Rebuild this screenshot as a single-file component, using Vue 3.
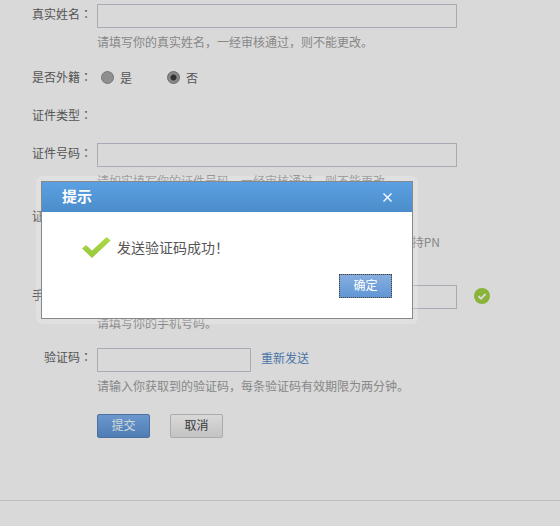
<script setup>
import { ref } from "vue";

const foreign = ref("no");
const showDialog = ref(true);
</script>

<template>
  <div class="page">
    <form class="form" @submit.prevent>
      <div class="row">
        <label class="label">真实姓名<span class="colon">：</span></label>
        <input class="input" type="text" />
      </div>
      <p class="hint">请填写你的真实姓名，一经审核通过，则不能更改。</p>

      <div class="row row-radio">
        <label class="label plain">是否外籍<span class="colon">：</span></label>
        <span class="radio-item" @click="foreign = 'yes'">
          <i class="radio" :class="{ on: foreign === 'yes' }"></i>是
        </span>
        <span class="radio-item" @click="foreign = 'no'">
          <i class="radio" :class="{ on: foreign === 'no' }"></i>否
        </span>
      </div>

      <div class="row row-type">
        <label class="label plain">证件类型<span class="colon">：</span></label>
      </div>

      <div class="row row-number">
        <label class="label">证件号码<span class="colon">：</span></label>
        <input class="input" type="text" />
      </div>
      <p class="hint">请如实填写你的证件号码，一经审核通过，则不能更改。</p>

      <div class="row row-photo">
        <label class="label plain">证件照片<span class="colon">：</span></label>
      </div>
      <p class="hint nowrap">请上传证件照片，文件大小不能超过两兆字节，图片格式 支持PN</p>

      <div class="row row-phone">
        <label class="label">手机号码<span class="colon">：</span></label>
        <input class="input" type="text" />
        <svg class="ok" width="16" height="16" viewBox="0 0 16 16">
          <circle cx="8" cy="8" r="8" fill="#a2d444" />
          <path d="M4.4 8.2l2.6 2.5 4.6-4.8" fill="none" stroke="#fff" stroke-width="2" />
        </svg>
      </div>
      <p class="hint">请填写你的手机号码。</p>

      <div class="row row-code">
        <label class="label high">验证码<span class="colon">：</span></label>
        <input class="input short" type="text" />
        <a class="resend" href="#" @click.prevent>重新发送</a>
      </div>
      <p class="hint">请输入你获取到的验证码，每条验证码有效期限为两分钟。</p>

      <div class="actions">
        <button class="btn primary" type="submit">提交</button>
        <button class="btn" type="button">取消</button>
      </div>
    </form>
    <div class="rule"></div>

    <div v-if="showDialog" class="mask"></div>
    <div v-if="showDialog" class="dialog-wrap">
      <div class="dialog">
        <div class="dialog-head">
          <span class="dialog-title">提示</span>
          <svg class="close" width="9" height="9" viewBox="0 0 9 9" @click="showDialog = false">
            <path d="M.5.5l8 8M8.5.5l-8 8" stroke="#fff" stroke-width="1.3" fill="none" />
          </svg>
        </div>
        <div class="dialog-body">
          <svg class="tick" width="30" height="24" viewBox="0 0 30 24">
            <defs>
              <linearGradient id="tickFill" x1="0" y1="0" x2="0" y2="1">
                <stop offset="0" stop-color="#aadb48" />
                <stop offset="1" stop-color="#98c83c" />
              </linearGradient>
            </defs>
            <path d="M0 12.6L4 9l6 5.4L24.6 1 28.6 4.6 10 22z" fill="url(#tickFill)" />
          </svg>
          <span class="dialog-msg">发送验证码成功！</span>
        </div>
        <div class="dialog-foot">
          <button class="btn-ok" type="button" @click="showDialog = false">确定</button>
        </div>
      </div>
    </div>
  </div>
</template>

<style>
html,
body {
  margin: 0;
  background: #fff;
  overflow: hidden;
}
</style>

<style scoped>
.page {
  position: relative;
  width: 560px;
  height: 526px;
  overflow: hidden;
  font-family: "Noto Sans CJK SC", "Liberation Sans", sans-serif;
  font-size: 12px;
  color: #646464;
}

.form {
  padding-top: 4px;
}

.row {
  display: flex;
  align-items: center;
  height: 24px;
}

.label {
  width: 92px;
  text-align: right;
  flex: none;
  line-height: 20px;
  margin-bottom: 4px;
}

.label.plain {
  margin-bottom: 0;
}

.label.high {
  margin-bottom: 6px;
}

.colon {
  font-family: "Noto Sans CJK TC", sans-serif;
}

.input {
  box-sizing: border-box;
  width: 360px;
  height: 24px;
  margin: 0 0 0 5px;
  padding: 0 4px;
  border: 1px solid #c6c9d3;
  background: #fff;
  outline: none;
}

.input.short {
  width: 154px;
}

.hint {
  margin: 4px 0 0 97px;
  line-height: 20px;
  height: 20px;
  color: #a0a0a0;
}

.nowrap {
  white-space: nowrap;
}

.row-radio {
  margin-top: 13px;
}

.row-type {
  margin-top: 14px;
}

.row-number {
  margin-top: 16px;
}

.row-photo {
  margin-top: 13px;
}

.row-phone {
  margin-top: 33px;
}

.row-code {
  margin-top: 15px;
}

.radio-item {
  display: flex;
  align-items: center;
  width: 66px;
  color: #646464;
}

.radio {
  box-sizing: border-box;
  width: 13px;
  height: 13px;
  margin: 0 6px 0 4px;
  border: 1px solid #8c8c8c;
  border-radius: 50%;
  background: #a8a8a8;
}

.radio.on {
  background: radial-gradient(circle, #3a3a3a 0 2.5px, #a0a0a0 3.5px 100%);
  border-color: #7a7a7a;
}

.row-radio .label + .radio-item {
  margin-left: 5px;
}

.ok {
  margin: 0 0 2px 17px;
}

.resend {
  margin: 0 0 6px 10px;
  color: #578bc6;
  text-decoration: none;
}

.actions {
  display: flex;
  gap: 20px;
  margin: 18px 0 0 97px;
}

.btn {
  box-sizing: border-box;
  width: 53px;
  height: 24px;
  padding: 0 0 4px;
  border: 1px solid #c9c9c9;
  border-radius: 2px;
  background: linear-gradient(#fff, #e6e6e6);
  color: #444;
  font: inherit;
}

.btn.primary {
  border-color: #5b86bb;
  background: linear-gradient(#7eb2f1, #5d94d4);
  color: #f3fdff;
}

.rule {
  height: 1px;
  margin-top: 62px;
  background: #e1e1e1;
}

.mask {
  position: absolute;
  inset: 0;
  background: rgba(0, 0, 0, 0.15);
}

.dialog-wrap {
  position: absolute;
  left: 36px;
  top: 176px;
  padding: 5px;
  border-radius: 6px;
  background: rgba(255, 255, 255, 0.2);
}

.dialog {
  box-sizing: border-box;
  display: flex;
  flex-direction: column;
  width: 372px;
  height: 138px;
  border: 1px solid #888;
  background: #fff;
}

.dialog-head {
  display: flex;
  align-items: center;
  justify-content: space-between;
  height: 30px;
  padding: 0 20px;
  background: linear-gradient(#5ba0e2, #4b8dca);
}

.dialog-title {
  margin-bottom: 4px;
  color: #fff;
  font-size: 15px;
  font-weight: 700;
}

.dialog-body {
  box-sizing: border-box;
  display: flex;
  align-items: center;
  height: 62px;
  padding: 10px 0 0 40px;
}

.tick {
  flex: none;
}

.dialog-msg {
  margin: 0 0 2px 5px;
  font-size: 14px;
  color: #555;
}

.dialog-foot {
  display: flex;
  justify-content: flex-end;
  padding-right: 20px;
}

.btn-ok {
  box-sizing: border-box;
  width: 53px;
  height: 24px;
  padding: 0 0 4px;
  border: 1px solid #6d8cb0;
  outline: 1px dotted #444;
  outline-offset: -1px;
  background: linear-gradient(#86aede, #6096d6);
  color: #fff;
  font: inherit;
}
</style>
